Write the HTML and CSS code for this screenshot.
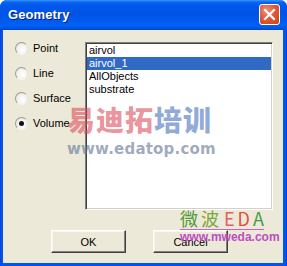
FILE: index.html
```html
<!DOCTYPE html>
<html>
<head>
<meta charset="utf-8">
<title>Geometry</title>
<link rel="stylesheet" href="styles.css">
</head>
<body>
<div class="window">
  <div class="titlebar">
    <span class="title">Geometry</span>
    <button class="close" aria-label="Close">
      <svg width="13" height="13" viewBox="0 0 13 13"><path d="M2 2 L11 11 M11 2 L2 11" stroke="#fff" stroke-width="2.2" stroke-linecap="square"/></svg>
    </button>
  </div>
  <div class="client">
    <div class="main">
      <div class="radios">
        <label class="radio"><span class="dot"></span>Point</label>
        <label class="radio"><span class="dot"></span>Line</label>
        <label class="radio"><span class="dot"></span>Surface</label>
        <label class="radio"><span class="dot on"></span>Volume</label>
      </div>
      <ul class="listbox">
        <li>airvol</li>
        <li class="sel">airvol_1</li>
        <li>AllObjects</li>
        <li>substrate</li>
      </ul>
    </div>
    <div class="buttons">
      <button class="btn">OK</button>
      <button class="btn">Cancel</button>
    </div>
  </div>

  <div class="wm wm-edatop">
    <div class="wm-cn"><span class="red">易迪拓</span><span class="blue">培训</span></div>
    <div class="wm-url">www.edatop.com</div>
  </div>
  <div class="wm wm-mweda">
    <div class="wm-logo"><span class="g">微</span><span class="o">波</span><span class="r">E</span><span class="r2">D</span><span class="g2">A</span></div>
    <div class="wm-site">www.mweda.com</div>
  </div>
</div>
</body>
</html>
```

FILE: styles.css
```css
html, body {
  margin: 0;
  padding: 0;
  background: #fff;
}

.window {
  position: relative;
  width: 287px;
  height: 266px;
  display: flex;
  flex-direction: column;
  background: linear-gradient(90deg, #0831d9 0, #0055ea 1px, #0055ea calc(100% - 1px), #0831d9 100%);
  border-radius: 7px 7px 0 0;
  overflow: hidden;
  font-family: "Liberation Sans", Arial, sans-serif;
  font-size: 11px;
  color: #000;
}

/* caption */
.titlebar {
  height: 30px;
  flex: none;
  display: flex;
  align-items: center;
  justify-content: space-between;
  padding: 0 7px 0 8px;
  background: linear-gradient(180deg, #3d95ff 0, #0a66f0 2px, #0058ee 5px, #0054e3 45%, #0060f5 85%, #0055e6 93%, #0045d0 100%);
}

.title {
  color: #fff;
  font-weight: bold;
  font-size: 13px;
  text-shadow: 1px 1px 0 #0a1e80;
  letter-spacing: 0.1px;
  padding-bottom: 1px;
}

.close {
  width: 21px;
  height: 21px;
  padding: 0;
  border: 1px solid #fff;
  border-radius: 3px;
  background: radial-gradient(circle at 35% 30%, #f0907a 0, #e15a37 45%, #c8421e 100%);
  display: flex;
  align-items: center;
  justify-content: center;
  margin-bottom: 1px;
}

/* dialog body */
.client {
  flex: 1;
  margin: 0 4px 3px 3px;
  background: #ece9d8;
  display: flex;
  flex-direction: column;
}

.main {
  display: flex;
  padding-top: 12px;
}

.radios {
  width: 82px;
  flex: none;
  box-sizing: border-box;
  padding-left: 12px;
  display: flex;
  flex-direction: column;
  gap: 12px;
}

.radio {
  height: 13px;
  line-height: 13px;
  display: flex;
  align-items: center;
  gap: 5px;
}

.dot {
  width: 11px;
  height: 11px;
  border-radius: 50%;
  border: 1px solid;
  border-color: #9a9a9a #e4e4e4 #f4f4f4 #9a9a9a;
  background: radial-gradient(circle at 60% 60%, #ffffff 0, #f4f3ee 50%, #dcd9cc 100%);
  position: relative;
  flex: none;
}

.dot.on::after {
  content: "";
  position: absolute;
  left: 3px;
  top: 3px;
  width: 5px;
  height: 5px;
  border-radius: 50%;
  background: #111;
}

.listbox {
  list-style: none;
  margin: 0;
  padding: 1px 0 0;
  width: 188px;
  height: 168px;
  flex: none;
  box-sizing: border-box;
  background: #fff;
  border: 1px solid;
  border-color: #808080 #ffffff #ffffff #808080;
  box-shadow: inset 1px 1px 0 #404040, inset -1px -1px 0 #d4d0c8;
}

.listbox li {
  height: 13px;
  line-height: 13px;
  margin: 0 1px;
  padding-left: 2px;
  white-space: nowrap;
}

.listbox li.sel {
  background: #316ac5;
  color: #fff;
}

.buttons {
  display: flex;
  gap: 27px;
  padding: 20px 0 0 48px;
}

.btn {
  width: 75px;
  height: 23px;
  padding: 0;
  font-family: "Liberation Sans", Arial, sans-serif;
  font-size: 11px;
  color: #000;
  background: #ece9d8;
  border: 1px solid;
  border-color: #ffffff #404040 #404040 #ffffff;
  box-shadow: inset -1px -1px 0 #808080, inset 1px 1px 0 #f6f5ee;
}

/* site marks printed over the dialog */
.wm {
  position: absolute;
  pointer-events: none;
}

.wm-edatop {
  left: 67px;
  top: 104px;
}

.wm-cn {
  font-family: "Noto Sans CJK SC", sans-serif;
  font-weight: 900;
  font-size: 28px;
  line-height: 30px;
  letter-spacing: 1px;
}

.wm-cn .red { color: rgba(220, 70, 85, 0.58); }
.wm-cn .blue { color: rgba(60, 105, 185, 0.58); }

.wm-url {
  font-family: "DejaVu Sans", sans-serif;
  font-weight: bold;
  font-size: 15px;
  line-height: 18px;
  color: rgba(95, 115, 150, 0.62);
  margin-top: 6px;
  letter-spacing: 0.2px;
}

.wm-mweda {
  left: 180px;
  top: 208px;
}

.wm-logo {
  font-family: "Noto Sans CJK SC", sans-serif;
  font-size: 18px;
  line-height: 20px;
  display: flex;
  gap: 3px;
}

.wm-logo .g { color: #4f9a3a; }
.wm-logo .o { color: #7aa83a; }
.wm-logo .r { color: #e0606a; margin-left: 2px; }
.wm-logo .r2 { color: #e0503a; }
.wm-logo .g2 { color: #3f9a40; }

.wm-site {
  border-top: 1px solid #d060c8;
  margin-top: 1px;
  padding-top: 1px;
  font-family: "Liberation Sans", Arial, sans-serif;
  font-weight: bold;
  font-size: 12px;
  line-height: 12px;
  color: #c04cc0;
  width: 84px;
}
```
